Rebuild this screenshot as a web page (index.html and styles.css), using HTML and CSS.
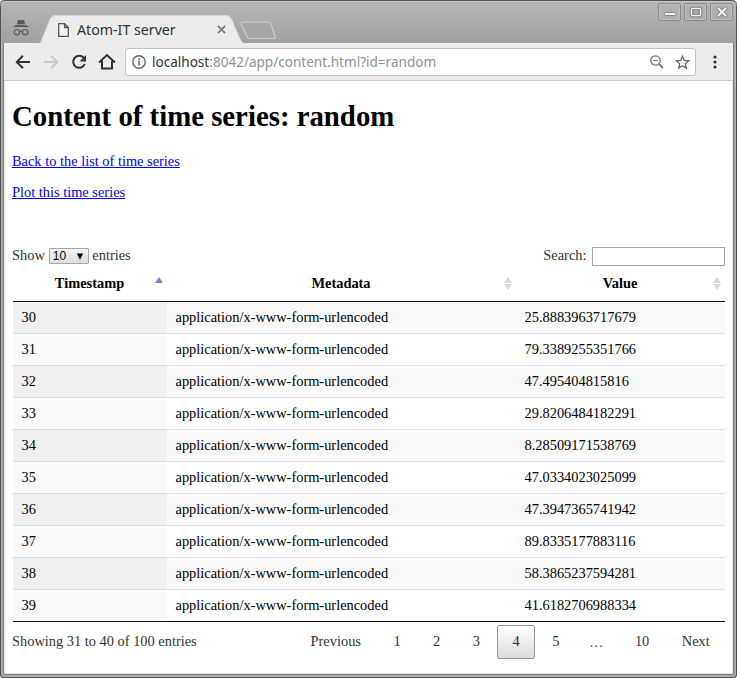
FILE: index.html
```html
<!DOCTYPE html>
<html lang="en">
<head>
<meta charset="utf-8">
<title>Atom-IT server</title>
<link rel="stylesheet" href="styles.css">
</head>
<body>
<div class="window">
  <header class="titlebar">
    <svg class="incognito" width="18" height="18" viewBox="0 0 18 18"><path d="M5 5.200 6 1h1.500l1.500.5L10.500 1H12l1 4.200z" fill="#555"/><path d="M.5 8 4 6.300h10L17.500 8z" fill="#555"/><g fill="none" stroke="#5c5c5c" stroke-width="1.200"><circle cx="4.900" cy="13.200" r="2.700"/><circle cx="13.100" cy="13.200" r="2.700"/><path d="M7.500 12.700q1.500-1 3 0"/></g></svg>
    <div class="tab">
      <svg class="tab-shape" width="208" height="29" viewBox="0 0 208 29"><path d="M0 29C3 28 3 26 4 24L12 4Q14 .5 17 .5H189Q192 .5 193.500 4L202 24Q204 28 207 29Z" fill="#ececec"/><path d="M0 29C3 28 3 26 4 24L12 4Q14 .5 17 .5H189Q192 .5 193.500 4L202 24Q204 28 207 29" fill="none" stroke="#d2d2d2"/></svg>
      <svg class="file" width="11" height="14" viewBox="0 0 11 14"><path d="M.7.700h5.800l3.800 3.800v8.800H.7zM6.500.700v3.800h3.800" fill="#f3f3f3" stroke="#555" stroke-width="1.300"/></svg>
      <span class="tab-title">Atom-IT server</span>
      <svg class="tab-close" width="9" height="9" viewBox="0 0 9 9"><path d="m.9.900 7.200 7.200M8.100.900.900 8.100" stroke="#7a7a7a" stroke-width="1.700"/></svg>
    </div>
    <svg class="newtab" width="36" height="19" viewBox="0 0 36 19"><path d="M3 1h25q2 0 3 2l4 12q.7 2.500-1.500 2.500H10q-2 0-3-2L1.500 4Q.7 1 3 1Z" fill="#a6a6a6" stroke="#cbcbcb" stroke-width="1.200"/></svg>
    <div class="controls">
      <span class="control"><svg width="20" height="16" viewBox="0 0 20 16"><rect x="4.500" y="8.500" width="11" height="3" rx="1" fill="#f2f2f2" stroke="#858585"/></svg></span>
      <span class="control"><svg width="20" height="16" viewBox="0 0 20 16"><rect x="5.500" y="4.500" width="9" height="7" rx="1" fill="none" stroke="#858585" stroke-width="3.400"/><rect x="5.500" y="4.500" width="9" height="7" rx="1" fill="#aaa" stroke="#f2f2f2" stroke-width="1.500"/><rect x="6.700" y="5.700" width="6.600" height="4.600" fill="none" stroke="#858585"/></svg></span>
      <span class="control"><svg width="20" height="16" viewBox="0 0 20 16"><path d="m6.500 4.500 7 7m0-7-7 7" stroke="#858585" stroke-width="4" stroke-linecap="round"/><path d="m6.500 4.500 7 7m0-7-7 7" stroke="#f2f2f2" stroke-width="2.200" stroke-linecap="round"/></svg></span>
    </div>
  </header>
  <nav class="toolbar">
    <svg class="back" width="16" height="16" viewBox="0 0 16 16"><path d="M15 8H2.500M8 1.800 1.800 8 8 14.200" fill="none" stroke="#2e3436" stroke-width="2"/></svg>
    <svg class="forward" width="16" height="16" viewBox="0 0 16 16"><path d="M1 8h12.500M8 1.800 14.200 8 8 14.200" fill="none" stroke="#c9cbcb" stroke-width="2"/></svg>
    <svg class="reload" width="16" height="16" viewBox="0 0 16 16"><path d="M13 4.200A6 6 0 1 0 13.800 10" fill="none" stroke="#2e3436" stroke-width="2"/><path d="M15 1v6.500H8.500z" fill="#2e3436"/></svg>
    <svg class="home" width="18" height="17" viewBox="0 0 18 17"><path d="M1 9.500 9 2l8 7.500M4 8v7.500h10V8" fill="none" stroke="#2e3436" stroke-width="2"/></svg>
    <div class="address">
      <svg class="info" width="14" height="14" viewBox="0 0 14 14"><circle cx="7" cy="7" r="6.200" fill="none" stroke="#666" stroke-width="1.400"/><path d="M6.200 6h1.600v4.500H6.200zM6.200 3.300h1.600v1.600H6.200z" fill="#666"/></svg>
      <span class="url">localhost<span class="url-path">:8042/app/content.html?id=random</span></span>
      <svg class="zoom" width="14" height="14" viewBox="0 0 14 14"><path d="m9 9 4 4" stroke="#777" stroke-width="1.800"/><circle cx="5.500" cy="5.500" r="4.700" fill="none" stroke="#777" stroke-width="1.300"/><path d="M3.300 5.500h4.400" stroke="#777" stroke-width="1.200"/></svg>
      <svg class="star" width="15" height="14" viewBox="0 0 15 14"><path d="m7.500 1.300 1.700 4.100 4.500.4-3.400 2.900 1 4.400-3.800-2.300-3.800 2.300 1-4.400L1.300 5.800l4.500-.4z" fill="none" stroke="#666" stroke-width="1.300"/></svg>
    </div>
    <svg class="menu" width="4" height="14" viewBox="0 0 4 14"><g fill="#2e3436"><circle cx="2" cy="2" r="1.600"/><circle cx="2" cy="7" r="1.600"/><circle cx="2" cy="12" r="1.600"/></g></svg>
  </nav>
  <main class="page">
    <h1>Content of time series: random</h1>
    <p><a href="#">Back to the list of time series</a></p>
    <p><a href="#">Plot this time series</a></p>
    <div class="filters">
      <div class="length">Show <span class="select"><span>10</span><svg width="8" height="7" viewBox="0 0 8 7"><path d="M.8.500h6.400L4 6.800z" fill="#000"/></svg></span> entries</div>
      <label class="search">Search:<input type="text"></label>
    </div>
    <table>
      <colgroup><col class="col-time"><col class="col-meta"><col class="col-value"></colgroup>
      <thead><tr><th class="asc">Timestamp</th><th class="sortable">Metadata</th><th class="sortable">Value</th></tr></thead>
      <tbody>
        <tr><td>30</td><td>application/x-www-form-urlencoded</td><td>25.8883963717679</td></tr>
        <tr><td>31</td><td>application/x-www-form-urlencoded</td><td>79.3389255351766</td></tr>
        <tr><td>32</td><td>application/x-www-form-urlencoded</td><td>47.495404815816</td></tr>
        <tr><td>33</td><td>application/x-www-form-urlencoded</td><td>29.8206484182291</td></tr>
        <tr><td>34</td><td>application/x-www-form-urlencoded</td><td>8.28509171538769</td></tr>
        <tr><td>35</td><td>application/x-www-form-urlencoded</td><td>47.0334023025099</td></tr>
        <tr><td>36</td><td>application/x-www-form-urlencoded</td><td>47.3947365741942</td></tr>
        <tr><td>37</td><td>application/x-www-form-urlencoded</td><td>89.8335177883116</td></tr>
        <tr><td>38</td><td>application/x-www-form-urlencoded</td><td>58.3865237594281</td></tr>
        <tr><td>39</td><td>application/x-www-form-urlencoded</td><td>41.6182706988334</td></tr>
      </tbody>
    </table>
    <div class="footer">
      <span>Showing 31 to 40 of 100 entries</span>
      <div class="pager"><span class="word">Previous</span><span>1</span><span>2</span><span>3</span><span class="current">4</span><span>5</span><span class="dots">…</span><span class="word">10</span><span class="word">Next</span></div>
    </div>
  </main>
</div>
</body>
</html>
```
FILE: styles.css
```css
* { box-sizing: border-box; }
body { margin: 0; background: #fff; overflow: hidden; }
svg { display: block; flex: none; }
.window {
  width: 737px; height: 678px; padding: 0 4px 4px;
  display: flex; flex-direction: column;
  background: #a5a3a1; border-radius: 5px 5px 4px 4px;
  box-shadow: inset 0 0 0 1px #4e4e4e, inset 0 0 0 2px #b5b3b1;
  overflow: hidden;
}
.titlebar {
  position: relative; z-index: 1;
  height: 43px; flex: none; margin: 0 -4px; display: flex; align-items: flex-start;
  background: linear-gradient(#b5b5b5, #a1a1a1);
  box-shadow: inset 0 1px #555, inset 0 2px #c5c5c5, inset 1px 0 #555, inset -1px 0 #555;
  border-radius: 5px 5px 0 0;
}
.incognito { margin: 19px 0 0 12px; }
.tab {
  position: relative; width: 208px; height: 29px; margin: 15px 0 0 8px;
  display: flex; align-items: center; font: 14.200px "Noto Sans", sans-serif; color: #2e3436;
}
.tab-shape { position: absolute; left: 0; top: 0; }
.file, .tab-title, .tab-close { position: relative; flex: none; }
.file { margin-left: 20px; }
.tab-title { margin-left: 8px; width: 140px; }
.newtab { margin: 21px 0 0 -6px; }
.controls { display: flex; gap: 3px; margin: 3px 4px 0 auto; }
.control {
  width: 23px; height: 18px; display: flex; justify-content: center;
  border: 1px solid #8a8a8a; border-radius: 2px; box-shadow: inset 0 0 0 1px #bebebe;
}
.toolbar {
  height: 38px; flex: none; display: flex; align-items: center;
  background: #ececec; border-bottom: 1px solid #cfcfcf; padding-left: 11px;
  box-shadow: 0 0 0 1px #858381;
}
.forward { margin-left: 12px; }
.reload { margin-left: 12px; }
.home { margin-left: 11px; }
.address {
  width: 571px; height: 28px; margin-left: 9px; padding: 0 5px 0 6px; display: flex; align-items: center;
  border: 1px solid #c3c3c3; border-radius: 3px; background: #fff;
  font: 13.550px "Noto Sans", sans-serif; color: #2e3436;
}
.url { margin-left: 6px; }
.url-path { color: #919494; }
.zoom { margin-left: auto; }
.star { margin-left: 11px; }
.menu { margin-left: 16.500px; }
.page {
  flex: 1; background: #fff; padding: 19px 8px 0;
  font: 14.400px/17px "Liberation Serif", serif; color: #000;
  box-shadow: -1px 0 #858381, 1px 0 #858381, 0 1px #858381, inset 1px 0 #e4e4e4, inset -1px -1px #e4e4e4;
}
h1 { margin: 0 0 20px; font-size: 28.800px; line-height: 33px; }
p { margin: 0 0 14px; }
a { color: #0000ee; }
.filters {
  display: flex; justify-content: space-between; align-items: flex-start;
  margin-top: 46px; height: 21px; color: #333;
}
.length { display: flex; }
.select {
  width: 40px; height: 16px; margin: 1px 3.500px 0 4px; padding: 0 4px 0 3px;
  display: flex; align-items: center; justify-content: space-between;
  border: 1px solid #a6a6a6; border-radius: 1px;
  background: linear-gradient(#f4f4f4, #dedede);
  font: 12px "Liberation Sans", sans-serif; color: #000;
}
.search { display: flex; }
input { width: 133px; height: 19px; margin: 0 0 0 5.500px; border: 1px solid #a6a6a6; padding: 0; }
table { width: 712px; margin-left: 1px; border-collapse: separate; border-spacing: 0; table-layout: fixed; border-bottom: 1px solid #111; }
.col-time { width: 154px; }
.col-meta { width: 349px; }
th { height: 34px; padding: 0 1px 2px 0; border-bottom: 1px solid #111; position: relative; text-align: center; }
th::before, th.sortable::after {
  content: ""; position: absolute; right: 4.500px; border: 4px solid transparent;
}
th::before { top: 9px; border-top: 0; border-bottom: 6px solid #d9d9d9; }
th.asc::before { border-bottom-color: #7c80dc; }
th.sortable::after { top: 16px; border-bottom: 0; border-top: 6px solid #d9d9d9; }
td { height: 32px; padding: 0 8.500px; border-top: 1px solid #ddd; }
tr:first-child td { border-top: 0; height: 31px; }
tbody tr:nth-child(odd) { background: #f9f9f9; }
tbody td:first-child { background: #fafafa; }
tbody tr:nth-child(odd) td:first-child { background: #f0f0f0; }
.footer { display: flex; justify-content: space-between; color: #333; padding-top: 3px; line-height: 32px; }
.pager { display: flex; gap: 2px; }
.pager span { min-width: 37.700px; height: 34px; text-align: center; }
.pager .word { padding: 0 15.250px; }
.pager .dots { width: 41px; padding-right: 2px; line-height: 34px; color: #555; }
.pager .current { border: 1px solid #979797; border-radius: 2px; background: linear-gradient(#fff, #dcdcdc); line-height: 30px; }
```
